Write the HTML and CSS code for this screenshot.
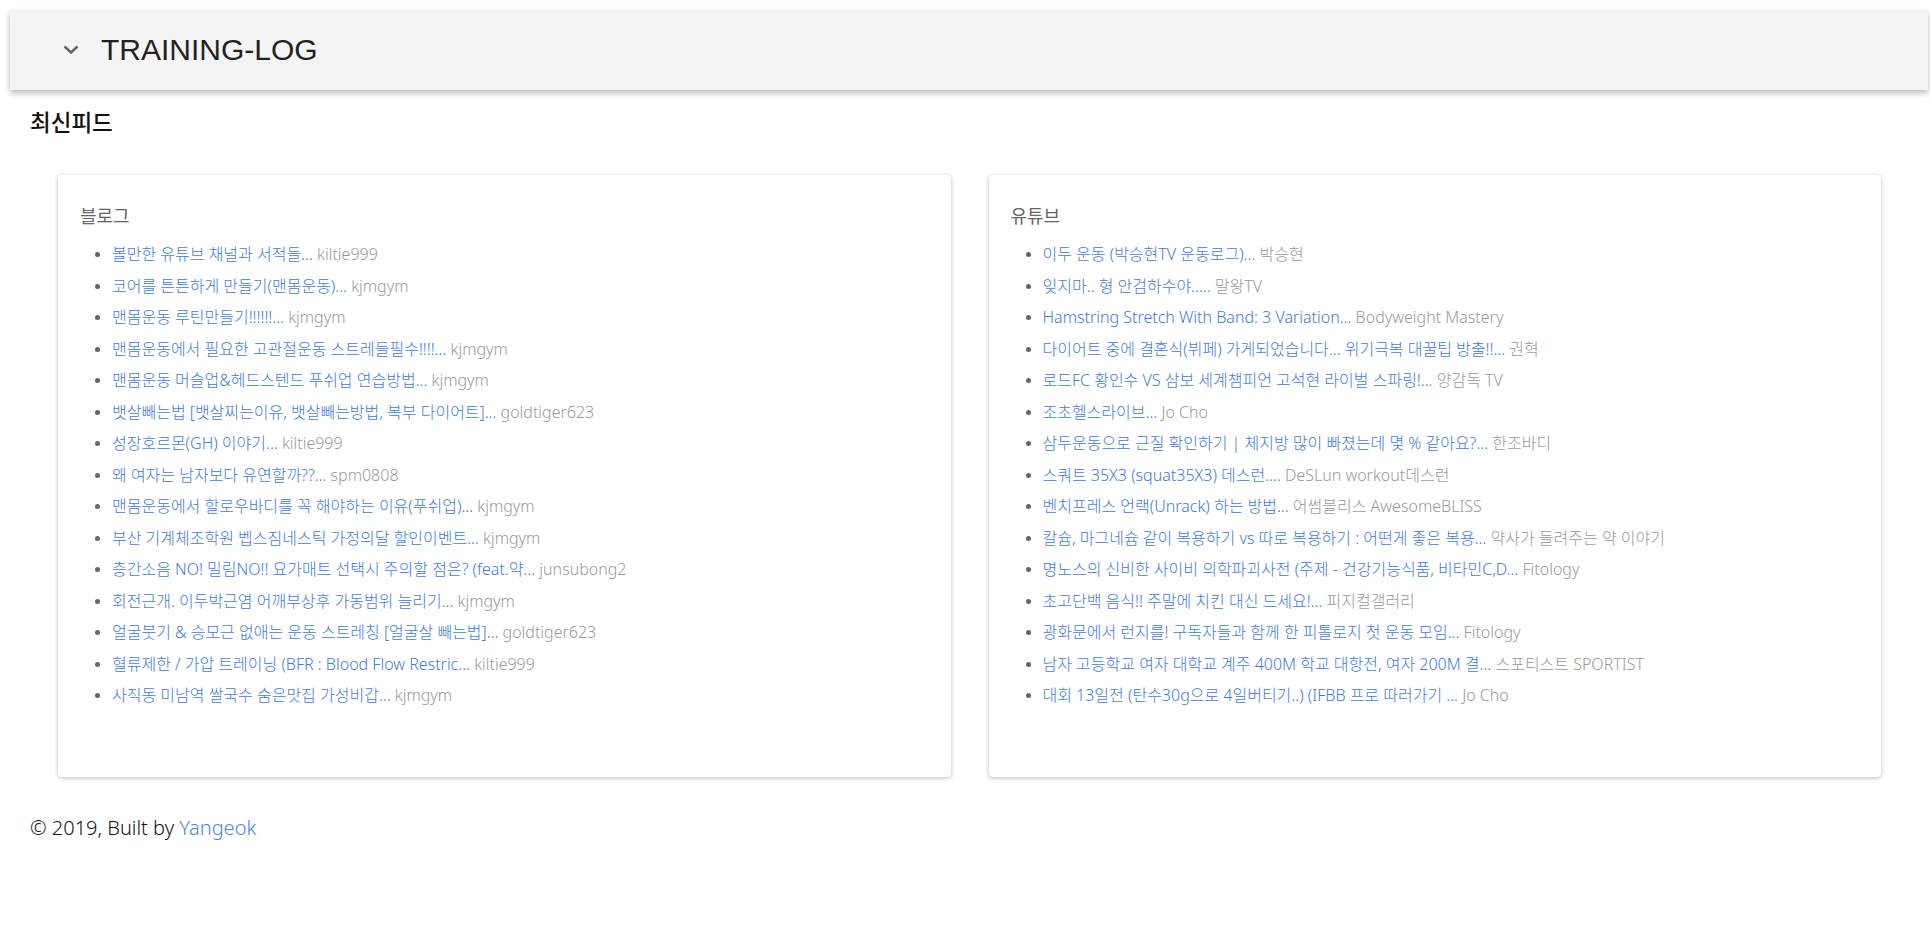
FILE: index.html
```html
<!DOCTYPE html>
<html lang="ko">
<head>
<meta charset="utf-8">
<title>TRAINING-LOG</title>
<link rel="stylesheet" href="styles.css">
</head>
<body>
<header class="topbar">
  <svg class="chevron" width="16" height="10" viewBox="0 0 16 10"><polyline points="1.5,1.5 8,7.5 14.5,1.5" fill="none" stroke="#666" stroke-width="2.4"/></svg>
  <h1 class="brand">TRAINING-LOG</h1>
</header>
<h2 class="section-title">최신피드</h2>
<main class="feeds">
  <section class="card">
    <h3 class="card-title">블로그</h3>
    <ul class="feed-list">
      <li><a href="#">볼만한 유튜브 채널과 서적들...</a> <span class="author">kiltie999</span></li>
      <li><a href="#">코어를 튼튼하게 만들기(맨몸운동)...</a> <span class="author">kjmgym</span></li>
      <li><a href="#">맨몸운동 루틴만들기!!!!!!...</a> <span class="author">kjmgym</span></li>
      <li><a href="#">맨몸운동에서 필요한 고관절운동 스트레들필수!!!!...</a> <span class="author">kjmgym</span></li>
      <li><a href="#">맨몸운동 머슬업&amp;헤드스텐드 푸쉬업 연습방법...</a> <span class="author">kjmgym</span></li>
      <li><a href="#">뱃살빼는법 [뱃살찌는이유, 뱃살빼는방법, 복부 다이어트]...</a> <span class="author">goldtiger623</span></li>
      <li><a href="#">성장호르몬(GH) 이야기...</a> <span class="author">kiltie999</span></li>
      <li><a href="#">왜 여자는 남자보다 유연할까??...</a> <span class="author">spm0808</span></li>
      <li><a href="#">맨몸운동에서 할로우바디를 꼭 해야하는 이유(푸쉬업)...</a> <span class="author">kjmgym</span></li>
      <li><a href="#">부산 기계체조학원 벱스짐네스틱 가정의달 할인이벤트...</a> <span class="author">kjmgym</span></li>
      <li><a href="#">층간소음 NO! 밀림NO!! 요가매트 선택시 주의할 점은? (feat.약...</a> <span class="author">junsubong2</span></li>
      <li><a href="#">회전근개. 이두박근염 어깨부상후 가동범위 늘리기...</a> <span class="author">kjmgym</span></li>
      <li><a href="#">얼굴붓기 &amp; 승모근 없애는 운동 스트레칭 [얼굴살 빼는법]...</a> <span class="author">goldtiger623</span></li>
      <li><a href="#">혈류제한 / 가압 트레이닝 (BFR : Blood Flow Restric...</a> <span class="author">kiltie999</span></li>
      <li><a href="#">사직동 미남역 쌀국수 숨은맛집 가성비갑...</a> <span class="author">kjmgym</span></li>
    </ul>
  </section>
  <section class="card">
    <h3 class="card-title">유튜브</h3>
    <ul class="feed-list">
      <li><a href="#">이두 운동 (박승현TV 운동로그)...</a> <span class="author">박승현</span></li>
      <li><a href="#">잊지마.. 형 안검하수야.....</a> <span class="author">말왕TV</span></li>
      <li><a href="#">Hamstring Stretch With Band: 3 Variation...</a> <span class="author">Bodyweight Mastery</span></li>
      <li><a href="#">다이어트 중에 결혼식(뷔페) 가게되었습니다... 위기극복 대꿀팁 방출!!...</a> <span class="author">권혁</span></li>
      <li><a href="#">로드FC 황인수 VS 삼보 세계챔피언 고석현 라이벌 스파링!...</a> <span class="author">양감독 TV</span></li>
      <li><a href="#">조초헬스라이브...</a> <span class="author">Jo Cho</span></li>
      <li><a href="#">삼두운동으로 근질 확인하기 | 체지방 많이 빠졌는데 몇 % 같아요?...</a> <span class="author">한조바디</span></li>
      <li><a href="#">스쿼트 35X3 (squat35X3) 데스런....</a> <span class="author">DeSLun workout데스런</span></li>
      <li><a href="#">벤치프레스 언랙(Unrack) 하는 방법...</a> <span class="author">어썸블리스 AwesomeBLISS</span></li>
      <li><a href="#">칼슘, 마그네슘 같이 복용하기 vs 따로 복용하기 : 어떤게 좋은 복용...</a> <span class="author">약사가 들려주는 약 이야기</span></li>
      <li><a href="#">명노스의 신비한 사이비 의학파괴사전 (주제 - 건강기능식품, 비타민C,D...</a> <span class="author">Fitology</span></li>
      <li><a href="#">초고단백 음식!! 주말에 치킨 대신 드세요!...</a> <span class="author">피지컬갤러리</span></li>
      <li><a href="#">광화문에서 런지를! 구독자들과 함께 한 피톨로지 첫 운동 모임...</a> <span class="author">Fitology</span></li>
      <li><a href="#">남자 고등학교 여자 대학교 계주 400M 학교 대항전, 여자 200M 결...</a> <span class="author">스포티스트 SPORTIST</span></li>
      <li><a href="#">대회 13일전 (탄수30g으로 4일버티기..) (IFBB 프로 따러가기 ...</a> <span class="author">Jo Cho</span></li>
    </ul>
  </section>
</main>
<footer class="footer">© 2019, Built by <a href="#">Yangeok</a></footer>
</body>
</html>
```

FILE: styles.css
```css
html, body {
  margin: 0;
  padding: 0;
  background: #fff;
}
body {
  font-family: "Noto Sans", "Noto Sans CJK KR", sans-serif;
  color: #111;
}
.topbar {
  margin: 10px 2px 0 10px;
  height: 80px;
  background: #f4f4f4;
  box-shadow: 0 3px 6px rgba(0, 0, 0, 0.28);
  display: flex;
  align-items: center;
  padding-left: 53px;
  box-sizing: border-box;
}
.chevron {
  display: block;
}
.brand {
  margin: 0 0 0 22px;
  font-family: "Liberation Sans", Arial, sans-serif;
  font-weight: 400;
  font-size: 30px;
  color: #222;
  letter-spacing: 0;
}
.section-title {
  margin: 19px 0 0 30px;
  font-family: "Noto Sans CJK KR", sans-serif;
  font-size: 22.5px;
  font-weight: 500;
  line-height: 24px;
  color: #111;
}
.feeds {
  display: grid;
  grid-template-columns: 1fr 1fr;
  gap: 38px;
  margin: 42px 49px 0 58px;
}
.card {
  height: 602px;
  box-sizing: border-box;
  background: #fff;
  border-radius: 4px;
  box-shadow: 0 1px 4px rgba(0, 0, 0, 0.28);
  padding: 28px 22px 0 22px;
}
.card-title {
  margin: 0;
  font-family: "Noto Sans CJK KR", sans-serif;
  font-size: 18px;
  font-weight: 400;
  line-height: 24px;
  color: #666;
}
.feed-list {
  margin: 12px 0 0 0;
  padding-left: 32px;
  list-style: disc;
  font-family: "Noto Sans", "Noto Sans CJK KR", sans-serif;
  font-size: 16px;
  font-weight: 300;
}
.feed-list li {
  line-height: 31.5px;
  white-space: nowrap;
}
.feed-list li::marker {
  color: #666;
  font-size: 14px;
}
.feed-list a {
  color: #3b7ddd;
  text-decoration: none;
}
.author {
  color: #999;
}
.footer {
  margin: 37px 0 0 30px;
  font-family: "Noto Sans", "Noto Sans CJK KR", sans-serif;
  font-size: 20px;
  font-weight: 300;
  line-height: 28px;
  color: #111;
}
.footer a {
  color: #4a86e8;
  text-decoration: none;
}
```
